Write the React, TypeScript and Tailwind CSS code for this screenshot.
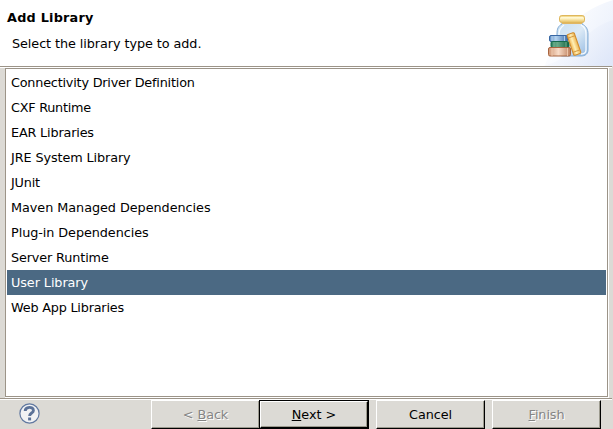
import type { ReactNode } from "react";

const libraries = [
  { name: "Connectivity Driver Definition", tracking: "tracking-[-0.2px]" },
  { name: "CXF Runtime", tracking: "tracking-[-0.25px]" },
  { name: "EAR Libraries", tracking: "tracking-[-0.17px]" },
  { name: "JRE System Library", tracking: "tracking-[-0.1px]" },
  { name: "JUnit", tracking: "tracking-[-0.2px]" },
  { name: "Maven Managed Dependencies", tracking: "tracking-[-0.04px]" },
  { name: "Plug-in Dependencies", tracking: "tracking-[-0.07px]" },
  { name: "Server Runtime", tracking: "tracking-[-0.13px]" },
  { name: "User Library", tracking: "tracking-[-0.08px]" },
  { name: "Web App Libraries", tracking: "tracking-[-0.2px]" },
];

function LibraryBanner() {
  return (
    <svg className="h-[66px] w-[83px] shrink-0" viewBox="0 0 83 66">
      <defs>
        <linearGradient id="sky" x1="0.1" y1="0.3" x2="1" y2="0.8">
          <stop offset="0" stopColor="#fff" />
          <stop offset="1" stopColor="#dce5f8" />
        </linearGradient>
        <linearGradient id="sweep" x1="0.2" y1="0.1" x2="1" y2="0.5">
          <stop offset="0" stopColor="#fff" />
          <stop offset="1" stopColor="#edf2fc" />
        </linearGradient>
        <linearGradient id="glass" x1="0" y1="0" x2="1" y2="1">
          <stop offset="0" stopColor="#c9e0f2" />
          <stop offset="0.5" stopColor="#dceaf6" />
          <stop offset="1" stopColor="#93b9e2" />
        </linearGradient>
        <linearGradient id="lid" x1="0" y1="0" x2="0" y2="1">
          <stop offset="0" stopColor="#edcf74" />
          <stop offset="0.4" stopColor="#fff5c8" />
          <stop offset="1" stopColor="#e5bd5b" />
        </linearGradient>
        <linearGradient id="blueBook" x1="0" x2="1">
          <stop offset="0" stopColor="#5c8bc4" />
          <stop offset="0.35" stopColor="#b6d4f0" />
          <stop offset="1" stopColor="#3f70ae" />
        </linearGradient>
        <linearGradient id="greenBook" x1="0" x2="1">
          <stop offset="0" stopColor="#2b8562" />
          <stop offset="0.35" stopColor="#69aa88" />
          <stop offset="1" stopColor="#126242" />
        </linearGradient>
        <linearGradient id="redBook" x1="0" x2="1">
          <stop offset="0" stopColor="#d09776" />
          <stop offset="0.45" stopColor="#f8dcc8" />
          <stop offset="1" stopColor="#bd7f5c" />
        </linearGradient>
        <linearGradient id="goldBook" x1="0" y1="0" x2="1" y2="0">
          <stop offset="0" stopColor="#f0b451" />
          <stop offset="0.45" stopColor="#fff0b6" />
          <stop offset="1" stopColor="#eeb24c" />
        </linearGradient>
      </defs>
      <path d="M83 0C61 7 48 16 35 32C24 45 17 57 15 66H83Z" fill="url(#sweep)" />
      <path d="M83 20C65 25 55 37 43 49C34 58 25 63 13 66H83Z" fill="url(#sky)" opacity="0.8" />
      <path d="M32 22h20v2c4 2 6 5 6 10v16c0 4-3 6-7 6H33c-4 0-6-3-6-6V34c0-5 1-8 5-10Z" fill="url(#glass)" stroke="#84add5" />
      <path d="M34 25c-3 2-5 4-5 9v3M51 25c4 2 5 5 5 9v16c0 3-2 4-5 4" fill="none" stroke="#f6fbff" strokeWidth="1.3" />
      <path d="M32 23.5h20" stroke="#e0b663" />
      <rect x="29.5" y="15.5" width="25" height="7" rx="2.3" fill="url(#lid)" stroke="#dfb75c" />
      <path d="M31 17.5h22" stroke="#fff7d5" />
      <rect x="19.5" y="35.5" width="18" height="6" rx="1.5" fill="url(#blueBook)" stroke="#3867a4" />
      <path d="M22 36v5M34.5 36v5" stroke="#c8def3" strokeWidth="0.8" />
      <rect x="21" y="41.5" width="18" height="6" rx="1.5" fill="url(#greenBook)" stroke="#14694b" />
      <path d="M24 42v5M36 42v5" stroke="#87bea0" strokeWidth="0.8" />
      <rect x="18.5" y="47.5" width="22" height="8.5" rx="1.5" fill="url(#redBook)" stroke="#a8643f" />
      <path d="M22 48v8M37.5 48v8" stroke="#f3cfb5" strokeWidth="0.8" />
      <g transform="rotate(-19 44 44)">
        <rect x="40.2" y="33" width="7.6" height="22" rx="1.2" fill="url(#goldBook)" stroke="#cf8c2d" />
        <path d="M40.5 36.5h7M40.5 51.5h7" stroke="#d39a43" strokeWidth="0.9" />
      </g>
    </svg>
  );
}

function HelpButton() {
  return (
    <button aria-label="Help" className="mb-[2px] ml-[19px] h-[21px] w-[21px]">
      <svg className="h-[21px] w-[21px]" viewBox="0 0 21 21">
        <circle cx="10.5" cy="10.5" r="9.6" fill="#f1f2f4" stroke="#6078a0" strokeWidth="1.2" />
        <path d="M6.2 8.1C6.2 3.3 14.4 3.2 14.4 7.4C14.4 10.1 10.6 9.9 10.6 13" fill="none" stroke="#5c7298" strokeWidth="2.9" />
        <path d="M9.1 14.5H12.1v2.9H9.1z" fill="#5c7298" />
      </svg>
    </button>
  );
}

function PushButton({ children, disabled = false }: { children: ReactNode; disabled?: boolean }) {
  return (
    <button
      disabled={disabled}
      className="h-[29px] w-[109px] border border-t-white border-r-black border-b-black border-l-white bg-[#dcdad5] tracking-[-0.08px] shadow-[inset_-1px_-1px_0_#9c9a8e] disabled:text-[#858585] disabled:[text-shadow:1px_1px_0_#fff]"
    >
      {children}
    </button>
  );
}

export default function App() {
  return (
    <main className="flex h-[429px] w-[613px] flex-col overflow-hidden bg-[#dcdad5] font-['DejaVu_Sans',sans-serif] text-[12.8px] leading-[25px] text-black">
      <header className="flex h-[66px] shrink-0 justify-between bg-white">
        <div className="pt-[5px] pl-[7px]">
          <h1 className="font-bold tracking-[0.24px]">Add Library</h1>
          <p className="mt-px pl-[5px] tracking-[-0.07px]">Select the library type to add.</p>
        </div>
        <LibraryBanner />
      </header>
      <div className="mr-px h-0.5 shrink-0 border-t border-[#9c9488] bg-white" />
      <section className="ml-[5px] h-[330px] w-[604px] shrink-0 border-r border-b border-white">
        <ul className="h-[329px] border border-[#9c9488] bg-white px-px pt-px">
          {libraries.map(({ name, tracking }) => (
            <li key={name} className={`h-[25px] pl-1 ${tracking} ${name === "User Library" ? "bg-[#4b6983] text-white" : ""}`}>
              {name}
            </li>
          ))}
        </ul>
      </section>
      <div className="mr-px h-0.5 shrink-0 border-t border-[#9c9488] bg-white" />
      <footer className="flex h-[29px] shrink-0 items-center">
        <HelpButton />
        <div className="ml-[111px] flex">
          <PushButton disabled>&lt; <u>B</u>ack</PushButton>
          <div className="-ml-px h-[29px] w-[110px] border border-black">
            <button className="h-[27px] w-[108px] border border-t-white border-r-black border-b-black border-l-white bg-[#dcdad5] shadow-[inset_-1px_-1px_0_#9c9a8e]">
              <u>N</u>ext &gt;
            </button>
          </div>
        </div>
        <div className="ml-[7px] flex gap-[7px]">
          <PushButton>Cancel</PushButton>
          <PushButton disabled><u>F</u>inish</PushButton>
        </div>
      </footer>
    </main>
  );
}
